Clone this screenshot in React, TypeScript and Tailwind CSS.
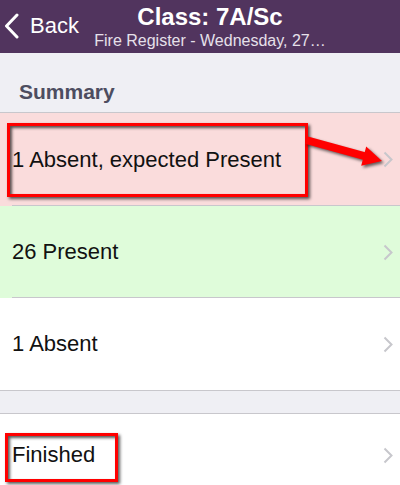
import React from 'react';

const FONT = { fontFamily: '"Liberation Sans", Arial, sans-serif' };

function Chevron() {
  return (
    <svg width="10" height="17" viewBox="0 0 10 17" className="shrink-0">
      <path d="M1.5 1.5 L8.5 8.5 L1.5 15.5" fill="none" stroke="#c7c7cc" strokeWidth="2" />
    </svg>
  );
}

interface RowProps {
  label: string;
  bg: string;
  height: string;
  inset?: boolean;
}

function Row({ label, bg, height, inset }: RowProps) {
  return (
    <div className={`relative flex items-center pl-[12px] pr-[7px] ${bg} ${height}`}>
      <span className="flex-1 text-[22px] leading-[26px] text-[#111]">{label}</span>
      <Chevron />
      {inset && <div className="absolute bottom-0 left-[12px] right-0 h-px bg-[#c8c7cc]" />}
    </div>
  );
}

export default function App() {
  return (
    <div className="relative w-[400px] h-[485px] overflow-hidden bg-[#efeff4]" style={FONT}>
      {/* Nav bar */}
      <div className="flex h-[53px] items-center bg-[#51345e] text-white">
        <div className="flex w-[80px] items-center gap-[10px] pl-[4px] pb-[2px]">
          <svg width="16" height="26" viewBox="0 0 16 26">
            <path d="M13 2 L2.5 13 L13 24" fill="none" stroke="white" strokeWidth="3" strokeLinecap="round" strokeLinejoin="round" />
          </svg>
          <span className="text-[22px] leading-[26px]">Back</span>
        </div>
        <div className="flex flex-1 flex-col items-center">
          <span className="text-[24px] font-bold leading-[28px]">Class: 7A/Sc</span>
          <span className="text-[16px] leading-[20px] text-[#e6e0ea]">Fire Register - Wednesday, 27…</span>
        </div>
        <div className="w-[60px]" />
      </div>

      {/* Summary header */}
      <div className="h-[60px] border-b border-[#c8c7cc] pl-[19px] pt-[27px]">
        <span className="text-[21px] font-bold leading-[24px] text-[#4d4d60]">Summary</span>
      </div>

      <Row label="1 Absent, expected Present" bg="bg-[#fadcdc]" height="h-[93px]" inset />
      <Row label="26 Present" bg="bg-[#dffcda]" height="h-[92px]" inset />
      <Row label="1 Absent" bg="bg-white" height="h-[92px]" />

      <div className="h-[24px] border-y border-[#c8c7cc]" />

      <Row label="Finished" bg="bg-white" height="h-[82px]" />

      {/* Annotations */}
      <div className="absolute left-[7px] top-[123px] h-[74px] w-[301px] border-[3px] border-[#ff0000] shadow-[2px_2px_3px_rgba(0,0,0,0.65),inset_2px_2px_3px_rgba(0,0,0,0.65)]" />
      <div className="absolute left-[5px] top-[433px] h-[49px] w-[113px] border-[3px] border-[#ff0000] shadow-[2px_2px_3px_rgba(0,0,0,0.65),inset_2px_2px_3px_rgba(0,0,0,0.65)]" />
      <svg
        className="pointer-events-none absolute left-0 top-0"
        width="400"
        height="485"
        style={{ filter: 'drop-shadow(2px 2px 1.5px rgba(0,0,0,0.6))' }}
      >
        <line x1="306" y1="140" x2="366" y2="156.5" stroke="#ff0000" strokeWidth="8" />
        <polygon points="382,161 361.2,165.8 366.2,146.4" fill="#ff0000" />
      </svg>
    </div>
  );
}
